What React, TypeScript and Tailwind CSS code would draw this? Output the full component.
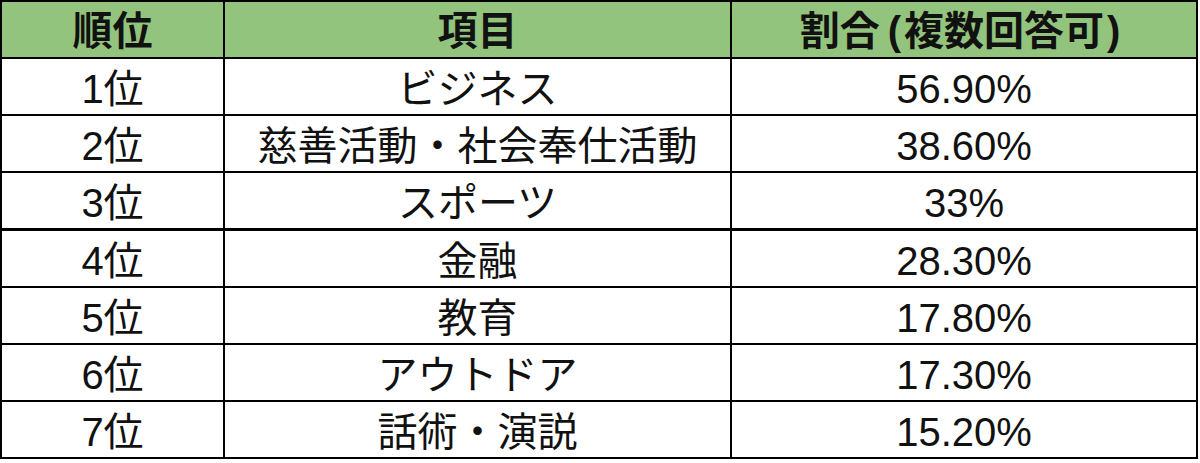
import React from "react";

const rows = [
  { rank: "1位", item: "ビジネス", rate: "56.90%" },
  { rank: "2位", item: "慈善活動・社会奉仕活動", rate: "38.60%" },
  { rank: "3位", item: "スポーツ", rate: "33%" },
  { rank: "4位", item: "金融", rate: "28.30%" },
  { rank: "5位", item: "教育", rate: "17.80%" },
  { rank: "6位", item: "アウトドア", rate: "17.30%" },
  { rank: "7位", item: "話術・演説", rate: "15.20%" },
];

const headCell =
  "flex items-center justify-center h-[57px] pt-[3px] border-r-2 border-b-2 border-black whitespace-nowrap";
const cell =
  "flex items-center justify-center h-[57px] pt-[5px] border-r-2 border-b-2 border-black whitespace-nowrap";

const App = () => {
  return (
    <div
      className="w-[1200px] h-[463px] bg-white text-[#111] text-[40px] leading-none overflow-hidden"
      style={{ fontFamily: '"Liberation Sans", "Noto Sans CJK JP", sans-serif' }}
    >
      <div className="w-[1198px] border-t-2 border-l-2 border-black">
        {/* header */}
        <div className="grid grid-cols-[223px_507px_466px] bg-[#93c47d] font-bold">
          <div className={headCell}>順位</div>
          <div className={headCell}>項目</div>
          <div className={headCell}>
            割合<span className="pl-[8px] pr-[3px]">(</span>複数回答可<span className="pl-[3px] pr-[8px]">)</span>
          </div>
        </div>

        {rows.map((row, index) => (
          <div
            key={index}
            className={
              index === 2
                ? "grid grid-cols-[223px_507px_466px] border-b border-black"
                : "grid grid-cols-[223px_507px_466px]"
            }
          >
            <div className={cell}>{row.rank}</div>
            <div className={cell}>{row.item}</div>
            <div className={cell}>{row.rate}</div>
          </div>
        ))}
      </div>
    </div>
  );
};

export default App;
